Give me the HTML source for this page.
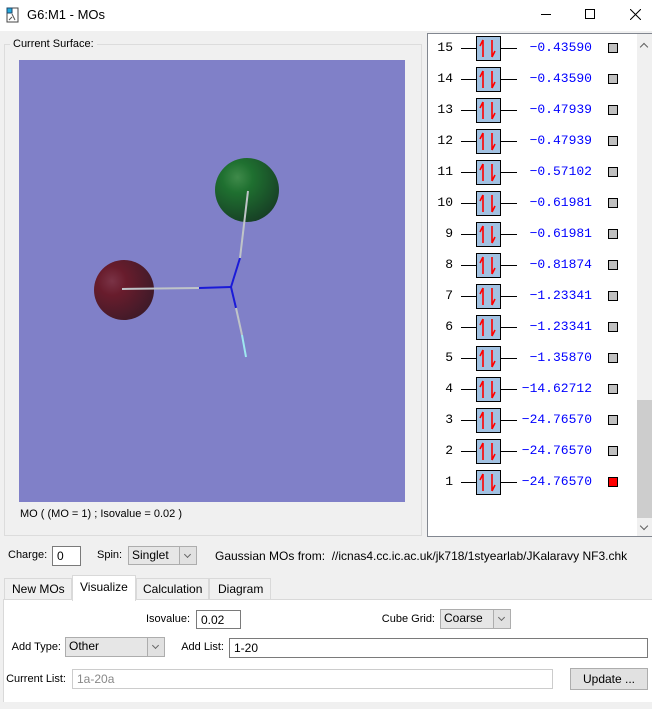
<!DOCTYPE html>
<html><head><meta charset="utf-8"><style>
*{box-sizing:border-box;margin:0;padding:0}
body{width:652px;height:709px;background:#f0f0f0;font-family:"Liberation Sans",sans-serif;font-size:12px;color:#000;position:relative;overflow:hidden}
.a{position:absolute}
.t{position:absolute;white-space:nowrap}
.r{position:absolute;white-space:nowrap;text-align:right;font-size:11px}
.inp{position:absolute;background:#fff;border:1px solid #7a7a7a;padding:2px 4px;font-size:12px;line-height:14px}
.sel{position:absolute;background:#e6e6e6;border:1px solid #adadad;padding:1px 3px;font-size:12px}
.sel i{position:absolute;right:0;top:0;bottom:0;width:17px;border-left:1px solid #adadad;background:#e1e1e1}
.sel i:after{content:"";position:absolute;left:5px;top:5px;width:4px;height:4px;border-right:1px solid #666;border-bottom:1px solid #666;transform:rotate(45deg)}
.mono{font-family:"Liberation Mono",monospace;font-size:13px}
</style></head><body>
<div class="a" style="left:0;top:0;width:652px;height:31px;background:#fff"></div>
<svg class="a" style="left:6px;top:7px" width="14" height="16"><rect x="1" y="1" width="11" height="14" fill="#fff" stroke="#444"/><rect x="1" y="1" width="5" height="5" fill="#2ad" stroke="#246"/><path d="M6 7 L9 13 M6 10 L3 13" stroke="#555"/></svg>
<div class="t" style="left:27px;top:7px;font-size:13px">G6:M1 - MOs</div>
<div class="a" style="left:541px;top:14px;width:10px;height:1px;background:#000"></div>
<div class="a" style="left:585px;top:9px;width:10px;height:10px;border:1px solid #000"></div>
<svg class="a" style="left:630px;top:9px" width="11" height="11"><path d="M0 0L11 11M11 0L0 11" stroke="#000"/></svg>

<div class="a" style="left:4px;top:44px;width:418px;height:492px;border:1px solid #dcdcdc"></div>
<div class="t" style="left:10px;top:38px;background:#f0f0f0;padding:0 3px;font-size:11px">Current Surface:</div>
<div class="a" style="left:19px;top:60px;width:386px;height:442px;background:#8080c8"></div>
<svg class="a" style="left:0;top:0" width="420" height="520">
<defs>
<radialGradient id="g" cx="0.35" cy="0.3" r="0.8"><stop offset="0" stop-color="#3f8a4a"/><stop offset="0.3" stop-color="#1f7030"/><stop offset="1" stop-color="#163a24"/></radialGradient>
<radialGradient id="r" cx="0.3" cy="0.35" r="0.8"><stop offset="0" stop-color="#7a3346"/><stop offset="0.3" stop-color="#681c2c"/><stop offset="1" stop-color="#3a1a28"/></radialGradient>
</defs>
<circle cx="247" cy="190" r="32" fill="url(#g)"/>
<circle cx="124" cy="290" r="30" fill="url(#r)"/>
<path d="M231 287 L240 258" stroke="#1a1ad8" stroke-width="2"/>
<path d="M240 258 L248 191" stroke="#bfc4c8" stroke-width="2"/>
<path d="M231 287 L199 288" stroke="#1a1ad8" stroke-width="2"/>
<path d="M199 288 L122 289" stroke="#bfc4c8" stroke-width="2"/>
<path d="M231 287 L236 308" stroke="#1a1ad8" stroke-width="2"/>
<path d="M236 308 L242 335" stroke="#bfc4c8" stroke-width="2"/>
<path d="M242 335 L246 357" stroke="#9ee8f0" stroke-width="2"/>
</svg>
<div class="t" style="left:20px;top:508px;font-size:11px">MO ( (MO = 1) ; Isovalue = 0.02 )</div>

<div class="a" style="left:427px;top:33px;width:225px;height:504px;background:#fff;border:1px solid #828790;border-right:none"></div>
<div class="a" style="left:637px;top:34px;width:15px;height:502px;background:#f0f0f0"></div>
<div class="a" style="left:637px;top:400px;width:15px;height:118px;background:#cdcdcd"></div>
<div class="a" style="left:641px;top:44px;width:6px;height:6px;border-left:1.5px solid #606060;border-top:1.5px solid #606060;transform:rotate(45deg)"></div>
<div class="a" style="left:641px;top:523px;width:6px;height:6px;border-right:1.5px solid #606060;border-bottom:1.5px solid #606060;transform:rotate(45deg)"></div>
<div id="L"></div>

<div class="t" style="left:8px;top:549px;font-size:11px">Charge:</div>
<div class="inp" style="left:52px;top:546px;width:29px;height:20px">0</div>
<div class="t" style="left:97px;top:549px;font-size:11px">Spin:</div>
<div class="sel" style="left:128px;top:546px;width:69px;height:19px">Singlet<i></i></div>
<div class="t" style="left:215px;top:549px">Gaussian MOs from:&nbsp; //icnas4.cc.ic.ac.uk/jk718/1styearlab/JKalaravy NF3.chk</div>

<div class="a" style="left:3px;top:599px;width:649px;height:103px;background:#fff;border-top:1px solid #d9d9d9;border-left:1px solid #d9d9d9"></div>
<div class="a" style="left:4px;top:578px;width:68px;height:22px;border:1px solid #d9d9d9;background:#f0f0f0"></div>
<div class="t" style="left:12px;top:582px">New MOs</div>
<div class="a" style="left:72px;top:575px;width:64px;height:26px;border:1px solid #d9d9d9;border-bottom:none;background:#fff;z-index:1"></div>
<div class="t" style="left:80px;top:580px;z-index:2">Visualize</div>
<div class="a" style="left:136px;top:578px;width:73px;height:22px;border:1px solid #d9d9d9;background:#f0f0f0"></div>
<div class="t" style="left:143px;top:582px">Calculation</div>
<div class="a" style="left:209px;top:578px;width:62px;height:22px;border:1px solid #d9d9d9;background:#f0f0f0"></div>
<div class="t" style="left:218px;top:582px">Diagram</div>

<div class="r" style="right:462px;top:613px">Isovalue:</div>
<div class="inp" style="left:196px;top:610px;width:45px;height:19px">0.02</div>
<div class="r" style="right:217px;top:613px">Cube Grid:</div>
<div class="sel" style="left:440px;top:609px;width:71px;height:20px">Coarse<i></i></div>
<div class="r" style="right:591px;top:641px">Add Type:</div>
<div class="sel" style="left:65px;top:637px;width:100px;height:20px">Other<i></i></div>
<div class="r" style="right:428px;top:641px">Add List:</div>
<div class="inp" style="left:229px;top:638px;width:419px;height:20px">1-20</div>
<div class="r" style="right:586px;top:673px">Current List:</div>
<div class="inp" style="left:72px;top:669px;width:481px;height:20px;color:#888;border-color:#ccc">1a-20a</div>
<div class="a" style="left:570px;top:668px;width:78px;height:22px;background:#e1e1e1;border:1px solid #adadad;text-align:center;line-height:20px">Update ...</div>
<script>
var vals=["-0.43590","-0.43590","-0.47939","-0.47939","-0.57102","-0.61981","-0.61981","-0.81874","-1.23341","-1.23341","-1.35870","-14.62712","-24.76570","-24.76570","-24.76570"];
var h="";
for(var i=0;i<15;i++){var n=15-i,cy=48+31*i;
h+='<div class="t mono" style="left:400px;width:53px;text-align:right;top:'+(cy-8)+'px">'+n+'</div>';
h+='<div class="a" style="left:461px;top:'+cy+'px;width:15px;height:1px;background:#000"></div>';
h+='<div class="a" style="left:500px;top:'+cy+'px;width:17px;height:1px;background:#000"></div>';
h+='<svg class="a" style="left:476px;top:'+(cy-12)+'px" width="25" height="25"><rect x="0.5" y="0.5" width="24" height="24" fill="#a2c2e2" stroke="#000"/><path d="M7 4V21M7 4L4 10M16 4V21M16 21L19 15" stroke="#f00" stroke-width="1.6" fill="none"/></svg>';
h+='<div class="t mono" style="left:480px;width:112px;text-align:right;top:'+(cy-8)+'px;color:#00f">'+vals[i].replace("-","&minus;")+'</div>';
h+='<div class="a" style="left:608px;top:'+(cy-5)+'px;width:10px;height:10px;border:1px solid #000;background:'+(n==1?'#f00':'#c0c0c0')+'"></div>';}
document.getElementById("L").innerHTML=h;
</script>
</body></html>
